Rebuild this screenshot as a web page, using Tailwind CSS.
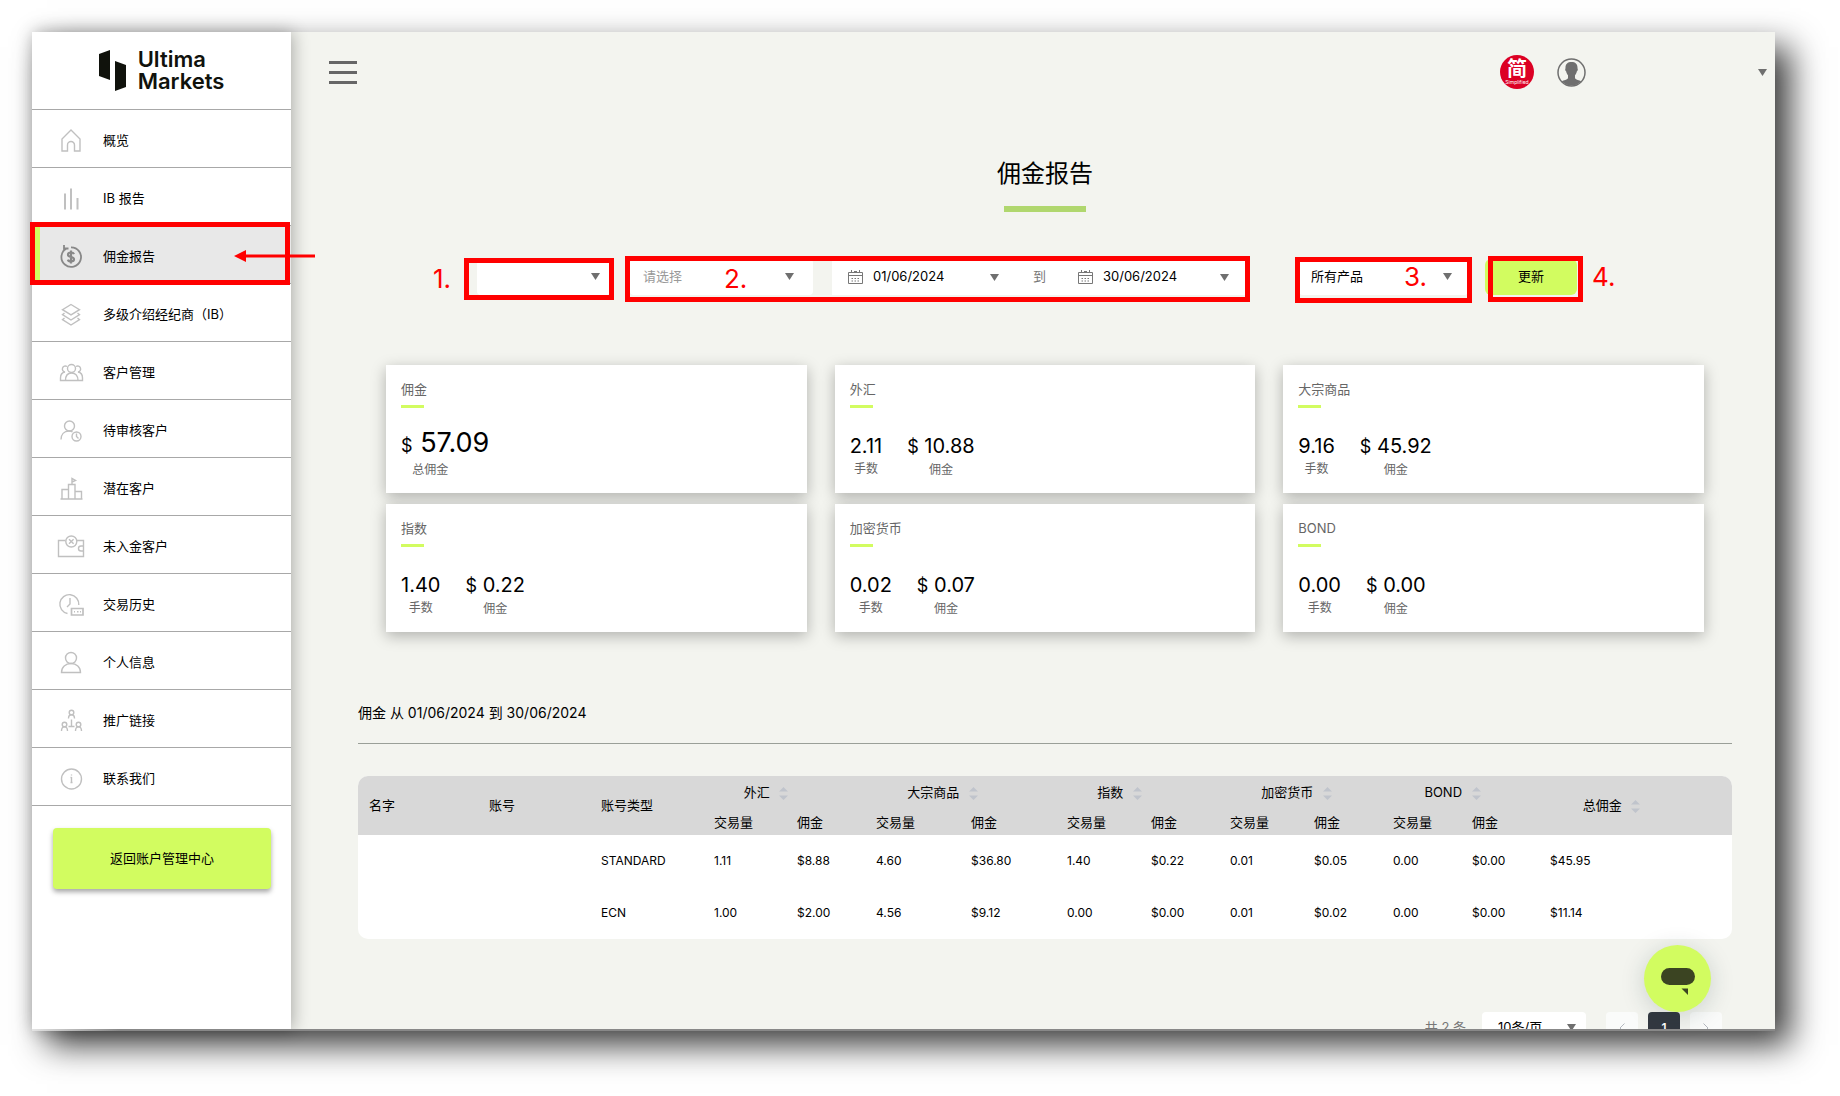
<!DOCTYPE html>
<html lang="zh-CN">
  <head>
    <meta charset="UTF-8" />
    <meta name="viewport" content="width=device-width, initial-scale=1.0" />
    <title>佣金报告 - Ultima Markets</title>
    <script src="https://cdn.jsdelivr.net/npm/@tailwindcss/browser@4"></script>
  </head>
  <body class="h-screen overflow-hidden bg-white pt-8 pr-[65px] pb-[66px] pl-8 font-['Inter','Noto_Sans_CJK_SC',sans-serif] text-[13px] text-black">
    <div class="relative flex h-full shadow-[15px_15px_32px_rgba(0,0,0,0.78)]">
      <!-- sidebar -->
      <aside class="relative z-10 flex w-[259px] shrink-0 flex-col bg-white shadow-[2px_0_16px_rgba(0,0,0,0.3)]">
        <a href="#" class="flex h-[78px] items-start justify-center gap-3 border-b border-[#a8a8a8] pt-4">
          <svg class="mt-0.5 h-[42px] w-[27px]" viewBox="0 0 27 42" fill="#10120c">
            <path d="M0 4 11 0v30L0 26z" />
            <path d="M16 11l11 4v22l-11 4z" />
          </svg>
          <span class="text-[22px] leading-[22px] font-semibold text-[#10120c]">Ultima<br />Markets</span>
        </a>
        <nav id="menu"></nav>
        <button type="button" class="mt-[22px] mr-5 ml-[21px] h-[61px] rounded bg-[#d2fc60] shadow-[0_3px_5px_rgba(0,0,0,0.35)]">返回账户管理中心</button>
      </aside>

      <!-- content -->
      <main class="relative min-w-0 flex-1 overflow-hidden bg-[#f3f4ef] pr-[43px] pl-[67px]">
        <header class="-mr-[43px] -ml-[29px] flex h-20 items-center">
          <button type="button" aria-label="菜单" class="flex h-[23px] w-7 flex-col justify-between">
            <span class="h-[3px] w-full bg-[#666]"></span>
            <span class="h-[3px] w-full bg-[#666]"></span>
            <span class="h-[3px] w-full bg-[#666]"></span>
          </button>
          <button type="button" class="ml-auto flex size-[34px] flex-col items-center rounded-full bg-[#dc0024] pt-1 text-white">
            <span class="text-[20px] leading-[20px] font-bold">简</span>
            <span class="text-[5px] leading-[6px]">Simplified</span>
          </button>
          <svg class="ml-[23px] size-[29px]" viewBox="0 0 29 29">
            <circle cx="14.500" cy="14.500" r="13.500" fill="none" stroke="#6f6f6f" stroke-width="1.500" />
            <path fill="#6f6f6f" d="M14.500 4c4 0 6.300 2.200 6 6.500.6.500.3 2.200-.6 2.700-.4 1.800-1 3-1.900 4v3c1 1.500 4 1.900 6.300 3A13.500 13.500 0 0 1 4.700 23.200c2.300-1.100 5.300-1.500 6.300-3v-3c-.9-1-1.500-2.200-1.900-4-.9-.5-1.200-2.200-.6-2.700C8.200 6.200 10.500 4 14.500 4z" />
          </svg>
          <button type="button" aria-label="账户" class="mr-2 flex w-[181px] justify-end">
            <svg class="h-[7px] w-[9px]" viewBox="0 0 9 7" fill="#6f6f6f"><path d="M0 0h9L4.500 7z" /></svg>
          </button>
        </header>

        <h1 class="mt-[46px] text-center text-[24px] leading-8">佣金报告</h1>
        <div class="mx-auto mt-4 h-[6px] w-[82px] bg-[#b0d76e]"></div>

        <!-- filters -->
        <form class="mt-[47px] ml-[119px] flex h-9 items-center">
          <div class="relative h-full w-[133px]">
            <select aria-label="账户" class="h-full w-full appearance-none rounded bg-white px-3"><option></option></select>
            <svg class="pointer-events-none absolute top-[14px] right-[10px] h-[7px] w-[9px]" viewBox="0 0 9 7" fill="#6f6f6f"><path d="M0 0h9L4.500 7z" /></svg>
            <div class="pointer-events-none absolute -top-px -right-1 -bottom-[5px] -left-[13px] border-5 border-[#f00]"></div>
            <span class="absolute top-0.5 -left-11 text-[26px] leading-9 text-[#f00]">1.</span>
          </div>
          <div class="relative ml-5 flex h-full w-[615px]">
            <div class="relative h-full w-[183px] shrink-0">
              <select aria-label="请选择" class="h-full w-full appearance-none rounded bg-white px-[13px] text-[#999]"><option>请选择</option></select>
              <svg class="pointer-events-none absolute top-[14px] right-[19px] h-[7px] w-[9px]" viewBox="0 0 9 7" fill="#6f6f6f"><path d="M0 0h9L4.500 7z" /></svg>
              <span class="pointer-events-none absolute top-0.5 left-[94px] text-[26px] leading-9 text-[#f00]">2.</span>
            </div>
            <div class="ml-[19px] flex h-full flex-1 items-center bg-white px-4">
              <svg class="h-[14px] w-[15px] shrink-0" viewBox="0 0 15 14" fill="none" stroke="#777"><path d="M.5 2.500h14v11H.5zM.5 5.500h14M3.500 0v3M11.500 0v3M6 1.500h3" /><path stroke-dasharray="1.500 1.500" d="M3.500 8.500h9M3.500 11h9" /></svg>
              <input type="text" aria-label="开始日期" value="01/06/2024" class="ml-[10px] w-[117px]" />
              <svg class="h-[7px] w-[9px] shrink-0" viewBox="0 0 9 7" fill="#6f6f6f"><path d="M0 0h9L4.500 7z" /></svg>
              <span class="w-[79px] shrink-0 pl-[34px] text-[#777]">到</span>
              <svg class="h-[14px] w-[15px] shrink-0" viewBox="0 0 15 14" fill="none" stroke="#777"><path d="M.5 2.500h14v11H.5zM.5 5.500h14M3.500 0v3M11.500 0v3M6 1.500h3" /><path stroke-dasharray="1.500 1.500" d="M3.500 8.500h9M3.500 11h9" /></svg>
              <input type="text" aria-label="结束日期" value="30/06/2024" class="ml-[10px] w-[117px]" />
              <svg class="h-[7px] w-[9px] shrink-0" viewBox="0 0 9 7" fill="#6f6f6f"><path d="M0 0h9L4.500 7z" /></svg>
            </div>
            <div class="pointer-events-none absolute -top-[3px] -right-[5px] -bottom-[7px] -left-[5px] border-5 border-[#f00]"></div>
          </div>
          <div class="relative ml-[54px] h-full w-[169px]">
            <select aria-label="产品" class="h-full w-full appearance-none rounded bg-white px-3"><option>所有产品</option></select>
            <svg class="pointer-events-none absolute top-[14px] right-[16px] h-[7px] w-[9px]" viewBox="0 0 9 7" fill="#6f6f6f"><path d="M0 0h9L4.500 7z" /></svg>
            <div class="pointer-events-none absolute -top-0.5 -right-1 -bottom-2 -left-1 border-5 border-[#f00]"></div>
            <span class="pointer-events-none absolute top-0 left-[105px] text-[26px] leading-9 text-[#f00]">3.</span>
          </div>
          <div class="relative ml-[17px] h-full w-[92px]">
            <button type="button" class="h-full w-full rounded-md bg-[#d2fc60]">更新</button>
            <div class="pointer-events-none absolute -top-[3px] -right-[6px] -bottom-[7px] left-[3px] border-5 border-[#f00]"></div>
            <span class="absolute top-0 left-[107px] text-[26px] leading-9 text-[#f00]">4.</span>
          </div>
        </form>

        <section id="cards" class="mx-7 mt-[70px] grid grid-cols-3 gap-x-7 gap-y-[11px]"></section>

        <h2 class="mt-[70px] border-b border-[#9a9f98] pb-[19px] text-[14px] leading-[22px]">佣金 从 01/06/2024 到 30/06/2024</h2>

        <div class="mt-8 overflow-hidden rounded-[10px] bg-white">
          <table class="w-full table-fixed text-left text-[12px]">
            <colgroup>
              <col class="w-[120px]" /><col class="w-[112px]" /><col class="w-[113px]" />
              <col class="w-[83px]" /><col class="w-[79px]" />
              <col class="w-[95px]" /><col class="w-[96px]" />
              <col class="w-[84px]" /><col class="w-[79px]" />
              <col class="w-[84px]" /><col class="w-[79px]" />
              <col class="w-[79px]" /><col class="w-[78px]" />
              <col class="w-[193px]" />
            </colgroup>
            <thead id="table-head" class="bg-[#d8d8d8] text-[13px]"></thead>
            <tbody id="table-body"></tbody>
          </table>
        </div>

        <div class="mt-[73px] mr-[10px] flex h-8 items-center justify-end">
          <span class="mr-4 text-[#777]">共 2 条</span>
          <div class="relative mr-5 h-full w-[104px]">
            <select aria-label="每页条数" class="h-full w-full appearance-none rounded-sm bg-white px-4"><option>10条/页</option></select>
            <svg class="pointer-events-none absolute top-3 right-[10px] h-[7px] w-[9px]" viewBox="0 0 9 7" fill="#6f6f6f"><path d="M0 0h9L4.500 7z" /></svg>
          </div>
          <div class="flex h-full gap-[10px]">
            <button type="button" aria-label="上一页" class="flex w-8 items-center justify-center rounded-sm bg-[#fafbfa]">
              <svg class="h-[10px] w-[6px]" viewBox="0 0 6 10" fill="none" stroke="#b4b8bf"><path d="M5.500.5 1 5l4.500 4.500" /></svg>
            </button>
            <button type="button" class="w-8 rounded-sm bg-[#323840] text-[12px] font-semibold text-white">1</button>
            <button type="button" aria-label="下一页" class="flex w-8 items-center justify-center rounded-sm bg-[#fafbfa]">
              <svg class="h-[10px] w-[6px]" viewBox="0 0 6 10" fill="none" stroke="#b4b8bf"><path d="M.5.5 5 5 .5 9.500" /></svg>
            </button>
          </div>
        </div>
      </main>

      <!-- chat bubble -->
      <button type="button" aria-label="在线客服" class="absolute right-16 bottom-[18px] z-10 flex size-[67px] items-center justify-center rounded-full bg-[#d2fc60] shadow-[0_4px_24px_rgba(20,50,50,0.18)]">
        <svg class="mt-[6px] h-[27px] w-[34px]" viewBox="0 0 34 27" fill="#3b4422">
          <rect width="34" height="17" rx="8.500" />
          <path d="M20.500 20.500H27V27z" />
        </svg>
      </button>
      <div class="absolute inset-x-0 -bottom-px z-20 h-0.5 bg-linear-to-r from-[#e4e4e4] to-[#888] to-5%"></div>
    </div>
  </body>
  <script>
    const menu = [
      ["概览", '<path d="M3 22V10l9-9 9 9v12h-5.500v-6a3.500 3.500 0 0 0-7 0v6z"/>'],
      ["IB 报告", '<path stroke-width="2" d="M6 6.500v16M12 1.500v21M18.500 11v11.500"/>'],
      ["佣金报告", '<path stroke-width="1.800" d="M7.500 3.500A9.800 9.800 0 1 0 12 2.300M4 6l3.500-2.500M5 0v3.500h4.500"/><path stroke-width="2.200" d="M15 9.200c-.5-1.300-1.500-1.700-3-1.700-1.700 0-3 .8-3 2.200 0 3.200 6 1.500 6 4.600 0 1.400-1.300 2.200-3 2.200-1.600 0-2.700-.5-3.100-1.900M12 5.500v13"/>'],
      ["多级介绍经纪商（IB）", '<path d="m12 1.500 8.500 5.200-8.500 5.200-8.500-5.200zM5.500 10l-2 1.700L12 17l8.500-5.300-2-1.700M5.500 15l-2 1.700L12 22l8.500-5.300-2-1.700"/>'],
      ["客户管理", '<circle cx="12.500" cy="7.500" r="4"/><path d="M6.500 19.500c0-4.500 2-7.500 6-7.500s6.500 3 6.500 7.500zM8 5.500a3 3 0 1 0-2 5.500c-3 .5-4.500 3-4.500 6v2.500h5M17 5.500a3 3 0 1 1 2 5.500c3 .5 4.500 3 4.500 6v2.500h-5"/>'],
      ["待审核客户", '<circle cx="10.500" cy="7" r="5"/><path d="M2 20.500c0-5 3-8.500 8-8.500 1.500 0 2.500.2 3.500.8"/><circle cx="17.500" cy="17.500" r="4.500"/><path d="M17.500 14.500v3l2 2"/>'],
      ["潜在客户", '<path d="M1.500 22h22M3 22V12.500h6.500M9.500 22V7.500h6.500V22M16 14.500h6.500V22M13 7.500v-6l3.500 2-3.500 1.500"/>'],
      ["未入金客户", '<path d="M6.500 5.500H-.5v16h25v-16H18M24.500 11H22a2.500 2.500 0 0 0 0 5h2.500"/><circle cx="12.300" cy="6.500" r="5.500"/><path d="m10 4.200 4.600 4.600M14.600 4.200 10 8.800"/>'],
      ["交易历史", '<path d="M8.500 20.500A9.500 9.500 0 1 1 19.800 12M11 5v6l-3 3"/><path stroke-width="1.700" d="M12.500 15.500H24v6.500H12.500z"/><path d="M15 18.700h1M18 18.700h1.500M21 18.700h1"/>'],
      ["个人信息", '<circle cx="12" cy="7" r="5.500"/><path d="M2.500 21.500c0-5.500 4-9 9.500-9s9.500 3.500 9.500 9z"/>'],
      ["推广链接", '<circle cx="12.500" cy="3.500" r="2.300"/><path d="M9.500 9.500c0-5 6-5 6 0M12.500 10.500v7M9.500 17.500h6"/><circle cx="5.500" cy="15.500" r="2.300"/><path d="M2.500 22c0-5.500 6-5.500 6 0"/><circle cx="19.500" cy="15.500" r="2.300"/><path d="M16.500 22c0-5.500 6-5.500 6 0"/>'],
      ["联系我们", '<circle cx="12.500" cy="12" r="10"/><path d="M12.500 10v5.500M12.500 7.500v1M11.500 15.500h2M11.500 10.500h1"/>'],
    ];

    const arrow = `
      <div class="pointer-events-none absolute -top-1 right-px -bottom-0.5 -left-0.5 border-5 border-[#f00]"></div>
      <svg class="pointer-events-none absolute top-6 left-[202px] h-3 w-[81px]" viewBox="0 0 81 12" fill="#f00">
        <path d="M0 6 12 0v4.500h69v3H12V12z" />
      </svg>`;

    document.getElementById("menu").innerHTML = menu
      .map(([label, icon]) => {
        const active = label === "佣金报告";
        return `
          <a href="#" class="relative flex h-[58px] items-center border-b border-[#a8a8a8] pt-1 ${active ? "bg-[#e8e8e8]" : ""}">
            ${active ? '<span class="absolute inset-y-0 left-0 w-2 bg-[#d2fc60]"></span>' : ""}
            <svg class="ml-[27px] size-6 overflow-visible ${active ? "stroke-[#888]" : "stroke-[#c0c0c0]"}" viewBox="0 0 24 24" fill="none" stroke-width="1.400">${icon}</svg>
            <span class="ml-5">${label}</span>
            ${active ? arrow : ""}
          </a>`;
      })
      .join("");

    const cards = [
      { title: "外汇", lots: "2.11", amount: "10.88" },
      { title: "大宗商品", lots: "9.16", amount: "45.92" },
      { title: "指数", lots: "1.40", amount: "0.22" },
      { title: "加密货币", lots: "0.02", amount: "0.07" },
      { title: "BOND", lots: "0.00", amount: "0.00" },
    ];

    const cardHtml = (title, body) => `
      <div class="h-32 bg-white px-[15px] pt-[14px] shadow-[0_4px_14px_rgba(0,0,0,0.28)]">
        <h3 class="leading-5 text-[#666]">${title}</h3>
        <div class="mt-[6px] h-[3px] w-[23px] bg-[#d2fc60]"></div>
        ${body}
      </div>`;

    document.getElementById("cards").innerHTML =
      cardHtml(
        "佣金",
        `<div class="mt-5 inline-block text-center">
          <p class="text-[27px] leading-[30px]"><span class="text-[18px]">$</span> 57.09</p>
          <p class="pr-[30px] text-[12px] leading-[18px] text-[#666]">总佣金</p>
        </div>`
      ) +
      cards
        .map((c) =>
          cardHtml(
            c.title,
            `<div class="mt-[25px] flex gap-[25px] text-center">
              <div>
                <p class="text-[20px] leading-[26px]">${c.lots}</p>
                <p class="text-[12px] leading-5 text-[#666]">手数</p>
              </div>
              <div>
                <p class="text-[20px] leading-[26px]"><span class="text-[18px]">$</span> ${c.amount}</p>
                <p class="text-[12px] leading-5 text-[#666]">佣金</p>
              </div>
            </div>`
          )
        )
        .join("");

    const sort = `
      <button type="button" aria-label="排序" class="ml-1.5 inline-block align-middle">
        <svg class="h-[13px] w-[9px]" viewBox="0 0 9 13" fill="#c0c4cc"><path d="M0 4.500 4.500 0 9 4.500zM0 8.500h9L4.500 13z" /></svg>
      </button>`;
    const groups = [
      ["外汇", "pr-9"],
      ["大宗商品", "pr-9"],
      ["指数", "pr-9"],
      ["加密货币", "pr-2"],
      ["BOND", "pr-4"],
    ];

    document.getElementById("table-head").innerHTML = `
      <tr class="h-[34px]">
        ${["名字", "账号", "账号类型"].map((t) => `<th rowspan="2" class="pl-[11px] font-normal">${t}</th>`).join("")}
        ${groups.map(([t, pad]) => `<th colspan="2" class="${pad} text-center font-normal">${t}${sort}</th>`).join("")}
        <th rowspan="2" class="pr-12 text-center font-normal">总佣金${sort}</th>
      </tr>
      <tr class="h-[25px]">
        ${groups.map(() => `<th class="pl-[11px] font-normal">交易量</th><th class="pl-[11px] font-normal">佣金</th>`).join("")}
      </tr>`;

    const rows = [
      ["", "", "STANDARD", "1.11", "$8.88", "4.60", "$36.80", "1.40", "$0.22", "0.01", "$0.05", "0.00", "$0.00", "$45.95"],
      ["", "", "ECN", "1.00", "$2.00", "4.56", "$9.12", "0.00", "$0.00", "0.01", "$0.02", "0.00", "$0.00", "$11.14"],
    ];

    document.getElementById("table-body").innerHTML = rows
      .map((r) => `<tr class="h-[52px]">${r.map((c) => `<td class="pl-[11px]">${c}</td>`).join("")}</tr>`)
      .join("");
  </script>
</html>
